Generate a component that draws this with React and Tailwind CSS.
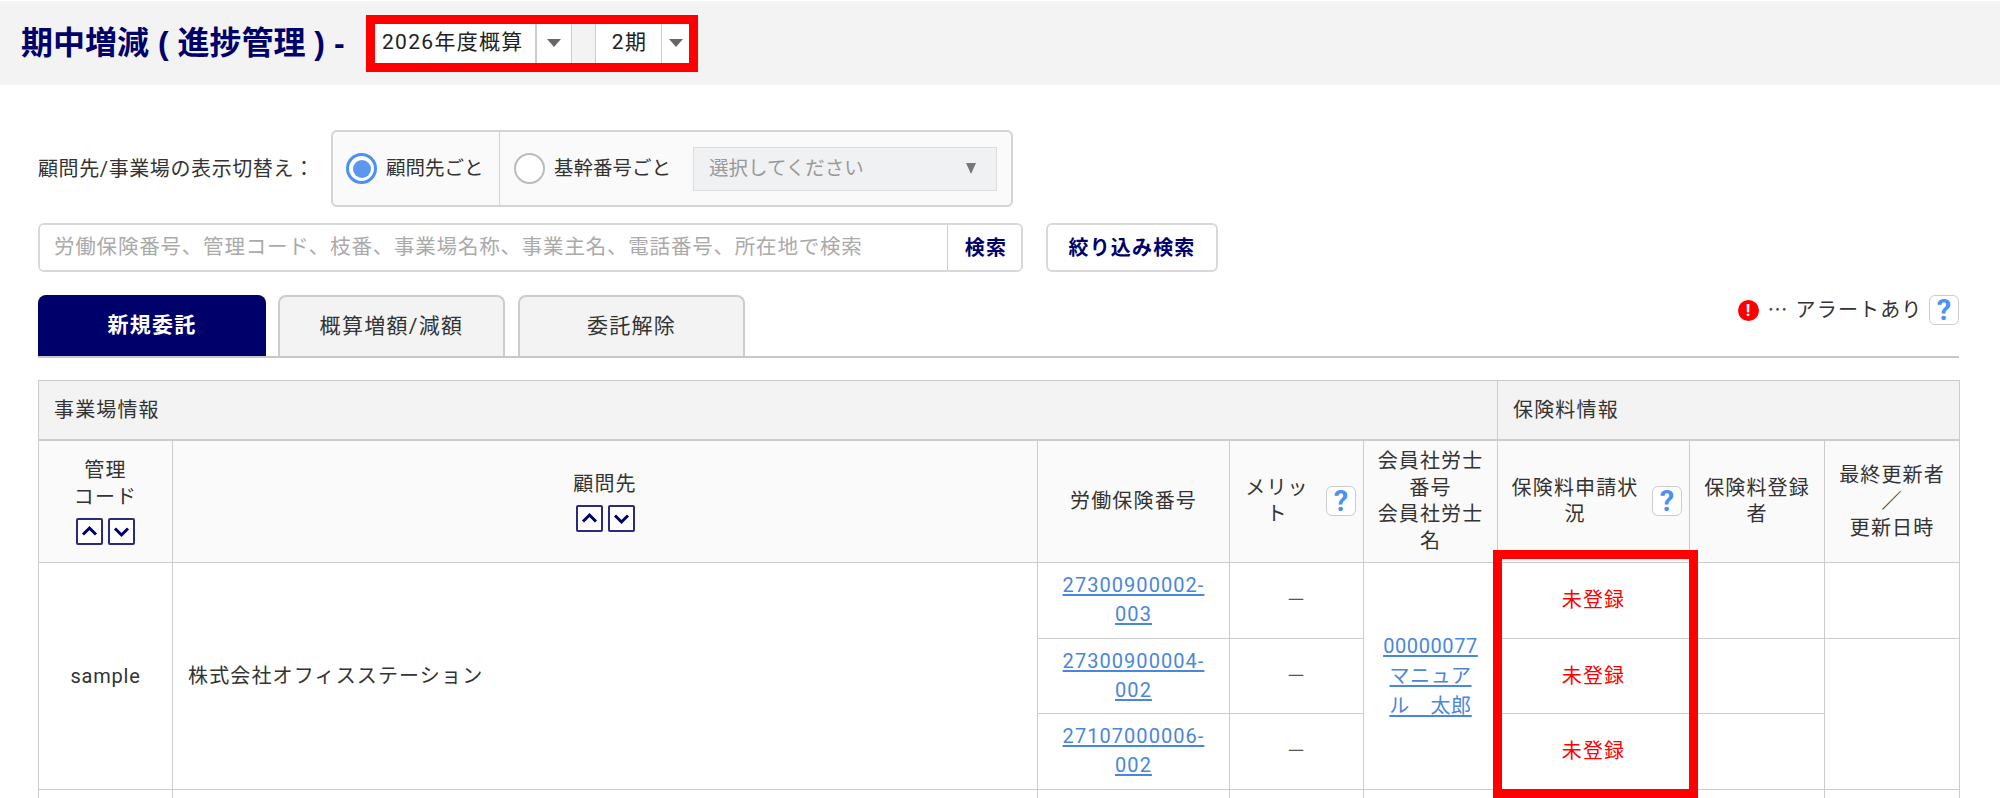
const cjk = { fontFamily: 'Roboto, "Noto Sans CJK JP", sans-serif' };

function Help({ className = "" }) {
  return (
    <span className={"flex h-[30px] w-[30px] shrink-0 items-center justify-center rounded-[6px] border border-[#ccc] bg-white text-[29px] font-bold leading-none tracking-normal text-[#4d90f0] " + className}>
      ?
    </span>
  );
}

function SortButtons() {
  const Btn = ({ d }) => (
    <span className="flex h-[27px] w-[27px] items-center justify-center rounded-[2px] border-2 border-[#2a2a80] bg-white">
      <svg width="17" height="17" viewBox="0 0 17 17" fill="none" stroke="#00006b" strokeWidth="3">
        <path d={d} />
      </svg>
    </span>
  );
  return (
    <span className="mt-[8px] flex justify-center gap-[5px]">
      <Btn d="M2 11.5 L8.5 5 L15 11.5" />
      <Btn d="M2 5.5 L8.5 12 L15 5.5" />
    </span>
  );
}

function Caret() {
  return <span className="h-0 w-0 border-x-[7px] border-t-[8px] border-x-transparent border-t-[#666]" />;
}

function Link({ children, wide }) {
  return <a className={(wide ? "tracking-[1.05px]" : "tracking-[0.6px]") + " text-[#4a86dc] underline underline-offset-2"}>{children}</a>;
}

const th = "border border-[#ccc] bg-[#fafafa] px-0 text-center align-middle font-normal leading-[26.5px] text-[#333]";
const td = "border border-[#ccc] bg-white text-center align-middle text-[#333]";

function Row({ no, first, last }) {
  return (
    <tr className="h-[75.5px]">
      {first && (
        <>
          <td rowSpan={3} className={td + " tracking-[0.8px]"}>sample</td>
          <td rowSpan={3} className={td + " !text-left pl-[15px]"}>株式会社オフィスステーション</td>
        </>
      )}
      <td className={td + " px-[20px] leading-[29px]"}><Link wide>{no}</Link></td>
      <td className={td}><span className="text-[#555]">－</span></td>
      {first && (
        <td rowSpan={3} className={td + " px-[16px] leading-[30px]"}>
          <Link>00000077<br />マニュアル　太郎</Link>
        </td>
      )}
      <td className={td + " !text-[#ff0000]"}>未登録</td>
      <td className={td}></td>
      {last}
    </tr>
  );
}

export default function App() {
  return (
    <div className="relative h-[798px] w-[2000px] overflow-hidden bg-white text-[20px] tracking-[1.15px] text-[#333]" style={cjk}>
      <header className="mt-px flex h-[84px] items-center bg-[#f3f3f3] pl-[21px]">
        <h1 className="w-[345px] text-[32px] font-bold tracking-normal whitespace-nowrap text-[#00006b]" style={{ fontFamily: '"Liberation Sans", "Noto Sans CJK JP", sans-serif' }}>
          期中増減 ( 進捗管理 ) -
        </h1>
        <div className="flex h-[57px] w-[332px] border-[9px] border-[#ff0000] bg-white text-[21px] tracking-[1.3px] text-[#222]">
          <span className="flex w-[162px] items-center border-r-2 border-[#ccc] pl-[7px] whitespace-nowrap">2026年度概算</span>
          <span className="flex w-[35px] items-center justify-center border-r border-[#ccc]"><Caret /></span>
          <span className="w-[24px] border-r border-[#ccc] bg-[#f3f3f3]"></span>
          <span className="flex w-[66px] items-center justify-center border-r border-[#ccc] pl-[2px]">2期</span>
          <span className="flex w-[27px] items-center justify-center"><Caret /></span>
        </div>
      </header>

      <main className="pl-[38px] pr-[41px]">
        <div className="mt-[45px] flex items-center">
          <span className="w-[293px] tracking-[0.6px] whitespace-nowrap">顧問先/事業場の表示切替え：</span>
          <div className="flex h-[77px] w-[682px] items-center rounded-[6px] border-2 border-[#d4d4d4] bg-[#fafafa] text-[19.5px] tracking-[0px]">
            <div className="flex h-full w-[167px] items-center border-r border-[#d4d4d4] pl-[13px]">
              <span className="flex h-[31px] w-[31px] items-center justify-center rounded-full border-[3px] border-[#4d90f0] bg-white">
                <span className="h-[18px] w-[18px] rounded-full bg-[#5b97ee]" />
              </span>
              <span className="ml-[9px] whitespace-nowrap">顧問先ごと</span>
            </div>
            <span className="ml-[14px] h-[31px] w-[31px] rounded-full border-[2.5px] border-[#bbb] bg-white" />
            <span className="ml-[9px] whitespace-nowrap">基幹番号ごと</span>
            <div className="ml-[22px] flex h-[44px] w-[304px] items-center justify-between border border-[#ddd] bg-[#f0f1f3] pl-[15px] pr-[20px] text-[#999]">
              <span>選択してください</span>
              <span className="h-0 w-0 border-x-[5.5px] border-t-[11px] border-x-transparent border-t-[#777]" />
            </div>
          </div>
        </div>

        <div className="mt-[16px] flex">
          <div className="flex h-[49px] w-[985px] overflow-hidden rounded-[6px] border-2 border-[#d8d8d8]">
            <input
              readOnly
              placeholder="労働保険番号、管理コード、枝番、事業場名称、事業主名、電話番号、所在地で検索"
              className="min-w-0 flex-1 bg-white pl-[14px] text-[20.5px] tracking-[0.8px] outline-none placeholder:text-[#aaa]"
            />
            <button className="w-[74px] border-l border-[#ccc] bg-white pl-[3px] font-bold text-[#00006b]">検索</button>
          </div>
          <button className="ml-[23px] h-[49px] w-[172px] rounded-[6px] border-2 border-[#d8d8d8] bg-white font-bold text-[#00006b]">絞り込み検索</button>
        </div>

        <div className="mt-[23px] flex items-start justify-between border-b-[2px] border-[#c8c8c8]">
          <div className="flex text-[21px] tracking-[1.3px]">
            <div className="flex h-[61px] w-[228px] items-center justify-center rounded-t-[8px] bg-[#00006b] font-bold text-white">新規委託</div>
            <div className="ml-[12px] flex h-[61px] w-[227px] items-center justify-center rounded-t-[8px] border-2 border-b-0 border-[#ccc] bg-[#f3f3f3]">概算増額/減額</div>
            <div className="ml-[13px] flex h-[61px] w-[227px] items-center justify-center rounded-t-[8px] border-2 border-b-0 border-[#ccc] bg-[#f3f3f3]">委託解除</div>
          </div>
          <div className="flex items-center">
            <span className="flex h-[21px] w-[21px] items-center justify-center rounded-full bg-[#ff0000] text-[17px] font-bold leading-none tracking-normal text-white">!</span>
            <span className="ml-[9px] text-[#444] tracking-normal">⋯</span>
            <span className="ml-[8px] whitespace-nowrap">アラートあり</span>
            <Help className="ml-[6.5px]" />
          </div>
        </div>

        <table className="mt-[22px] w-[1921px] table-fixed border-collapse">
          <colgroup>
            <col className="w-[134px]" />
            <col className="w-[865px]" />
            <col className="w-[192px]" />
            <col className="w-[134px]" />
            <col className="w-[134px]" />
            <col className="w-[192px]" />
            <col className="w-[135px]" />
            <col className="w-[135px]" />
          </colgroup>
          <thead>
            <tr className="h-[59px]">
              <th colSpan={5} className={th + " !bg-[#f3f3f3] border-b-2 !text-left pl-[15px]"}>事業場情報</th>
              <th colSpan={3} className={th + " !bg-[#f3f3f3] border-b-2 !text-left pl-[15px]"}>保険料情報</th>
            </tr>
            <tr className="h-[123px]">
              <th className={th}>
                <span className="block">管理<br />コード</span>
                <SortButtons />
              </th>
              <th className={th}>
                <span className="block">顧問先</span>
                <SortButtons />
              </th>
              <th className={th}>労働保険番号</th>
              <th className={th}>
                <span className="flex items-center pl-[7px]">
                  <span className="w-[80px]">メリット</span>
                  <Help className="ml-[9px]" />
                </span>
              </th>
              <th className={th + " px-[12px]"}>会員社労士番号<br />会員社労士名</th>
              <th className={th}>
                <span className="flex items-center pl-[12px]">
                  <span className="w-[130px]">保険料申請状況</span>
                  <Help className="ml-[12px]" />
                </span>
              </th>
              <th className={th + " px-[12px]"}>保険料登録者</th>
              <th className={th + " px-[12px]"}>最終更新者<br />／<br />更新日時</th>
            </tr>
          </thead>
          <tbody>
            <Row no="27300900002-003" first last={<td className={td}></td>} />
            <Row no="27300900004-002" last={<td rowSpan={2} className={td}></td>} />
            <Row no="27107000006-002" />
            <tr className="h-[60px]">
              <td className={td}></td>
              <td className={td}></td>
              <td className={td}></td>
              <td className={td}></td>
              <td className={td}></td>
              <td className={td}></td>
              <td className={td}></td>
              <td className={td}></td>
            </tr>
          </tbody>
        </table>
      </main>

      <div className="absolute left-[1493px] top-[550px] h-[248px] w-[205px] border-[9px] border-[#ff0000]" />
    </div>
  );
}
